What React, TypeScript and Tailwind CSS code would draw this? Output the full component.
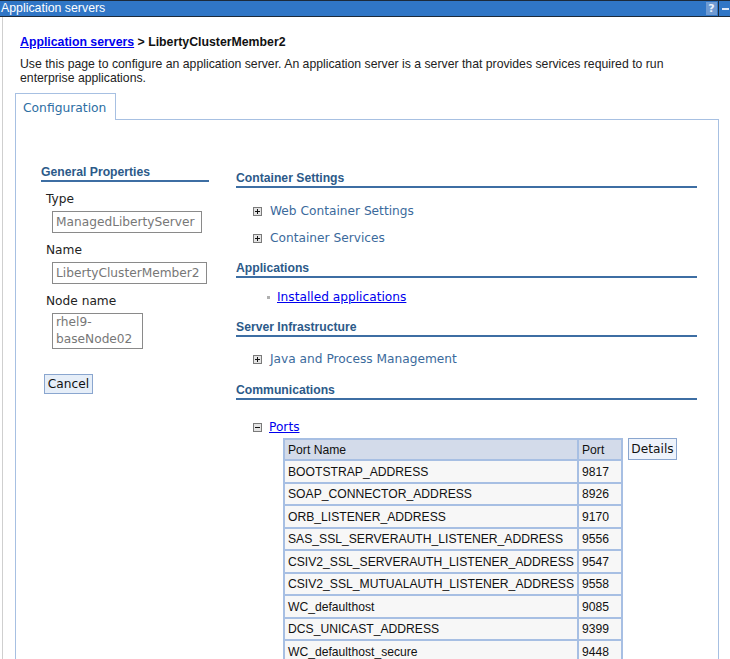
import React from 'react';

const ARIAL = "font-['Liberation_Sans',Arial,sans-serif]";
const DEJAVU = "font-['DejaVu_Sans',Verdana,sans-serif]";

const ports: [string, string][] = [
  ['BOOTSTRAP_ADDRESS', '9817'],
  ['SOAP_CONNECTOR_ADDRESS', '8926'],
  ['ORB_LISTENER_ADDRESS', '9170'],
  ['SAS_SSL_SERVERAUTH_LISTENER_ADDRESS', '9556'],
  ['CSIV2_SSL_SERVERAUTH_LISTENER_ADDRESS', '9547'],
  ['CSIV2_SSL_MUTUALAUTH_LISTENER_ADDRESS', '9558'],
  ['WC_defaulthost', '9085'],
  ['DCS_UNICAST_ADDRESS', '9399'],
  ['WC_defaulthost_secure', '9448'],
];

function ToggleIcon({ open }: { open?: boolean }) {
  return (
    <svg width="9" height="9" viewBox="0 0 9 9" className="shrink-0">
      <rect x="0.5" y="0.5" width="8" height="8" fill="#e4e4e4" stroke="#7a7a7a" />
      <path d="M2 4.5h5" stroke="#111" strokeWidth="1" />
      {!open && <path d="M4.5 2v5" stroke="#111" strokeWidth="1" />}
    </svg>
  );
}

function SectionHeading({ children, className = '' }: { children: React.ReactNode; className?: string }) {
  return (
    <div
      className={`h-[18px] pt-px border-b-2 border-[#3d6ea3] text-[12.2px] leading-[15px] font-bold text-[#2c5a89] ${ARIAL} ${className}`}
    >
      {children}
    </div>
  );
}

function ExpandItem({ label }: { label: string }) {
  return (
    <div className="h-[27px] flex items-center pl-[17px] gap-[8px]">
      <ToggleIcon />
      <span className="text-[12.2px] text-[#3b6a9c]">{label}</span>
    </div>
  );
}

function Field({ label, children, wide }: { label: string; children: React.ReactNode; wide: string }) {
  return (
    <>
      <div className="mt-[9px] h-[16px] leading-[16px] pl-[5px] text-[12.2px] text-[#222]">{label}</div>
      <div
        className={`mt-[4px] ml-[11px] ${wide} border border-[#8a8a8a] px-[3px] text-[12.2px] leading-[20px] text-[#777] whitespace-nowrap`}
      >
        {children}
      </div>
    </>
  );
}

export default function App() {
  return (
    <div className={`w-[730px] h-[659px] overflow-hidden bg-white ${DEJAVU}`}>
      {/* title bar */}
      <div className="h-[17px] bg-[#3076c6] border-y border-[#1c2a3a] flex items-center text-white">
        <span className={`pl-[1px] text-[12.35px] leading-[15px] ${ARIAL}`}>Application servers</span>
        <div className="ml-auto flex h-full">
          <div className="w-[11px] h-[13px] mt-px bg-[#6e9ad2] text-[11px] leading-[13px] text-center font-bold text-[#e8f0fb]">
            ?
          </div>
          <div className="w-px bg-[#1c2a3a] mx-[1px]" />
          <div className="w-[10px] flex items-center justify-center">
            <div className="w-[7px] h-[2px] bg-[#dfe9f7]" />
          </div>
        </div>
      </div>

      <div className="ml-[2px] border-l border-[#cfcfcf] h-full pl-[12px]">
        {/* breadcrumb */}
        <div className={`pt-[18px] pl-[5px] text-[12.3px] leading-[14px] font-bold text-[#111] ${ARIAL}`}>
          <a href="#" className="text-[#0000ee] underline">
            Application servers
          </a>{' '}
          &gt; LibertyClusterMember2
        </div>
        <p className={`mt-[8px] pl-[5px] text-[12.25px] leading-[14px] text-[#222] ${ARIAL}`}>
          Use this page to configure an application server. An application server is a server that provides
          services required to run
          <br />
          enterprise applications.
        </p>

        {/* tabs */}
        <div className="mt-[8px] flex w-[704px]">
          <div className="h-[27px] w-[101px] border-t border-x border-[#a7c0e2] pl-[7px] pt-[7px] text-[12.3px] leading-[15px] text-[#2d6ea3]">
            Configuration
          </div>
          <div className="h-[27px] flex-1 border-b border-[#a7c0e2]" />
        </div>

        {/* panel */}
        <div className="w-[704px] h-[600px] border-x border-[#a7c0e2] flex pl-[25px]">
          {/* left column */}
          <div className="w-[168px] pt-[44px] shrink-0">
            <SectionHeading>General Properties</SectionHeading>
            <Field label="Type" wide="w-[150px]">
              ManagedLibertyServer
            </Field>
            <Field label="Name" wide="w-[155px]">
              LibertyClusterMember2
            </Field>
            <div className="mt-[9px] h-[16px] leading-[16px] pl-[5px] text-[12.2px] text-[#222]">Node name</div>
            <div className="mt-[4px] ml-[11px] w-[91px] h-[36px] border border-[#8a8a8a] px-[3px] text-[12.2px] leading-[17px] text-[#777]">
              rhel9-
              <br />
              baseNode02
            </div>
            <button className="mt-[25px] ml-[3px] w-[49px] h-[20px] bg-[#e6eef8] border border-[#8aa6cf] text-[12.2px] leading-[18px] text-[#111]">
              Cancel
            </button>
          </div>

          {/* right column */}
          <div className="ml-[27px] w-[461px] pt-[50px]">
            <SectionHeading>Container Settings</SectionHeading>
            <div className="pt-[10px]">
              <ExpandItem label="Web Container Settings" />
              <ExpandItem label="Container Services" />
            </div>

            <SectionHeading className="mt-[8px]">Applications</SectionHeading>
            <div className="mt-[6px] h-[27px] flex items-center pl-[31px] gap-[7px]">
              <div className="w-[3px] h-[3px] bg-[#b0b0b0]" />
              <a href="#" className="text-[12.2px] text-[#0000ee] underline">
                Installed applications
              </a>
            </div>

            <SectionHeading className="mt-[8px]">Server Infrastructure</SectionHeading>
            <div className="mt-[9px]">
              <ExpandItem label="Java and Process Management" />
            </div>

            <SectionHeading className="mt-[9px]">Communications</SectionHeading>
            <div className="mt-[17px] h-[20px] flex items-center pl-[17px] gap-[7px]">
              <ToggleIcon open />
              <a href="#" className="text-[12.2px] text-[#0000ee] underline">
                Ports
              </a>
            </div>

            <div className="mt-[1px] ml-[47px] flex items-start gap-[5px]">
              <table className={`border-separate border-spacing-0 text-[12.15px] text-[#111] ${ARIAL}`}>
                <thead>
                  <tr className="bg-[#d3dbea]">
                    <th className="w-[296px] h-[23px] border-2 border-[#a7bfe3] pl-[3px] pt-px text-left font-normal">
                      Port Name
                    </th>
                    <th className="w-[44px] h-[23px] border-y-2 border-r-2 border-[#a7bfe3] pl-[3px] pt-px text-left font-normal">
                      Port
                    </th>
                  </tr>
                </thead>
                <tbody>
                  {ports.map(([name, port]) => (
                    <tr key={name} className="bg-[#f7f7f7]">
                      <td className="h-[22.5px] border-x-2 border-b-2 border-[#a7bfe3] pl-[3px] pt-px whitespace-nowrap">
                        {name}
                      </td>
                      <td className="h-[22.5px] border-r-2 border-b-2 border-[#a7bfe3] pl-[3px] pt-px">{port}</td>
                    </tr>
                  ))}
                </tbody>
              </table>
              <button className="w-[49px] h-[22px] bg-[#eef3fb] border border-[#8aa6cf] text-[12.2px] leading-[20px] text-[#111]">
                Details
              </button>
            </div>
          </div>
        </div>
      </div>
    </div>
  );
}
